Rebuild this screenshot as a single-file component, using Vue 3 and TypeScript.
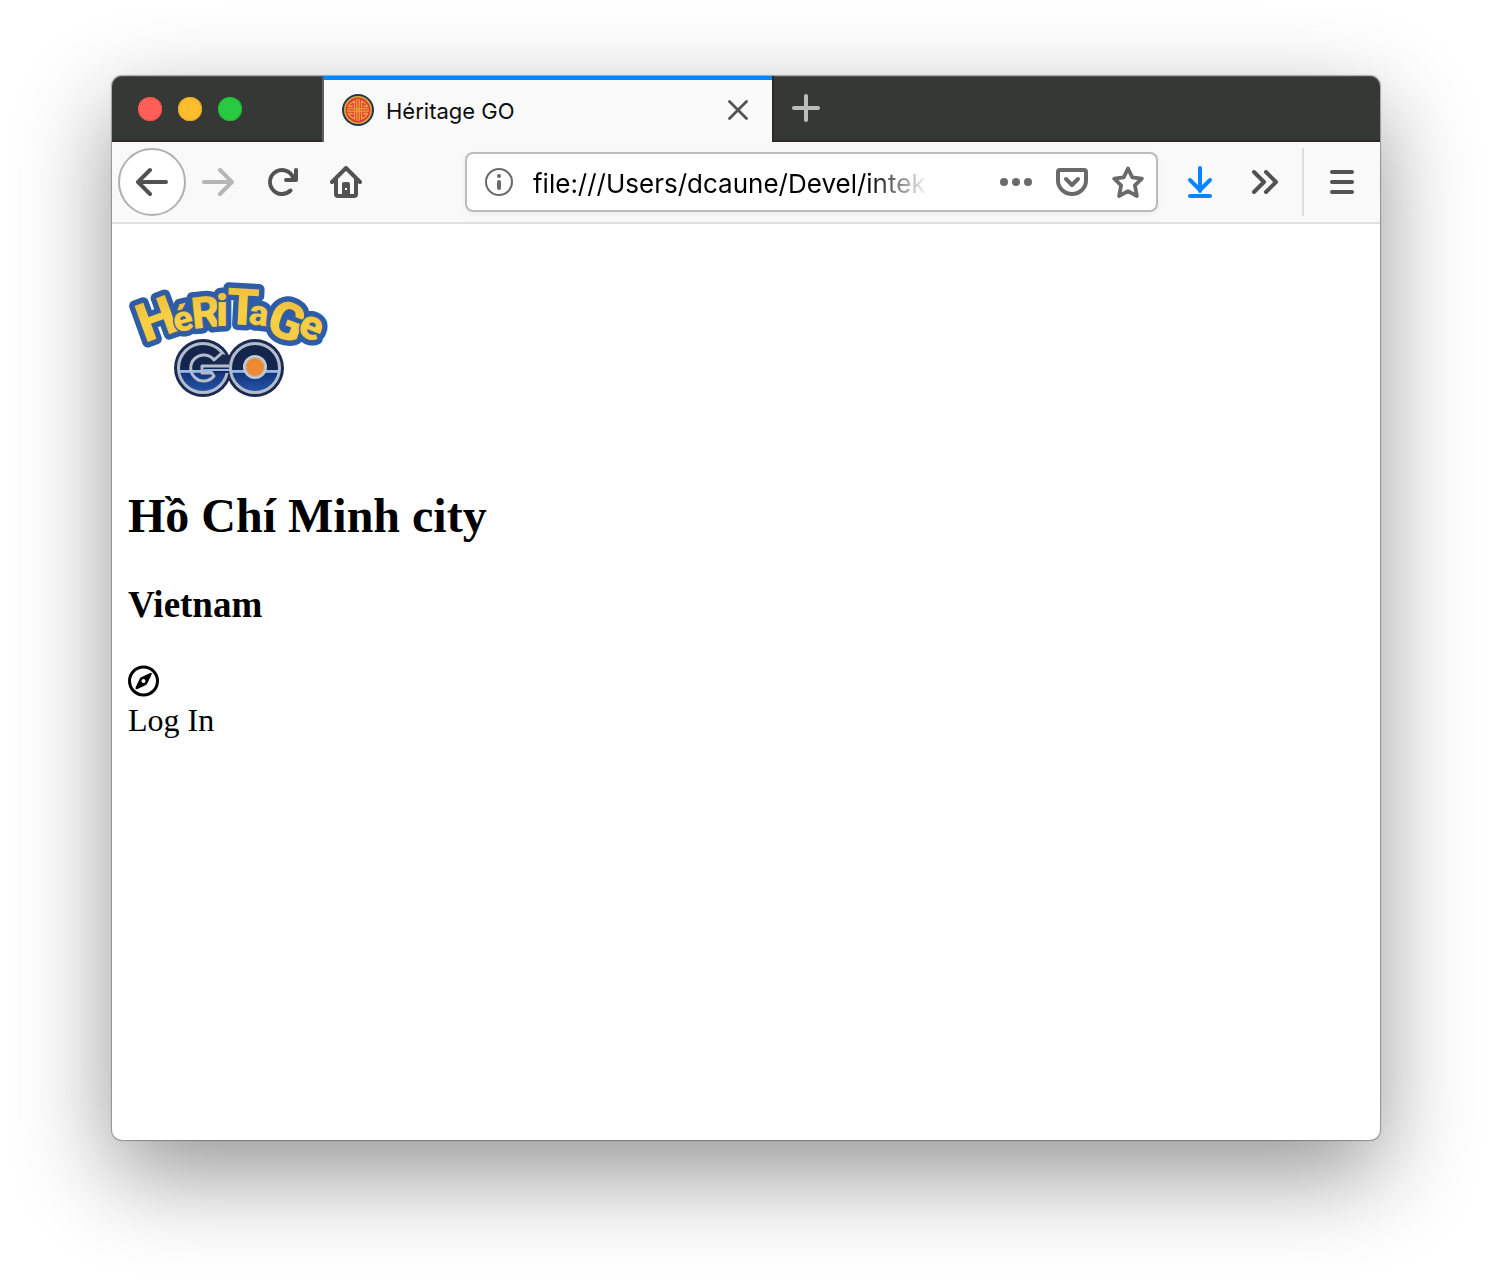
<script setup lang="ts">
import { ref } from 'vue'

interface LogoLetter {
  char: string
  x: number
  y: number
  size: number
  angle: number
}

const pageTitle = ref('Héritage GO')
const url = ref('file:///Users/dcaune/Devel/intek')

const letters: LogoLetter[] = [
  { char: 'H', x: 17, y: 103, size: 54, angle: -20 },
  { char: 'é', x: 48, y: 93, size: 36, angle: -14 },
  { char: 'R', x: 65, y: 89, size: 44, angle: -6 },
  { char: 'i', x: 88, y: 86, size: 44, angle: 0 },
  { char: 'T', x: 98, y: 84, size: 51, angle: 3 },
  { char: 'a', x: 120, y: 84, size: 36, angle: 7 },
  { char: 'G', x: 136, y: 92, size: 52, angle: 20 },
  { char: 'e', x: 168, y: 94, size: 42, angle: 22 },
]
</script>

<template>
  <main class="desktop">
    <section class="window">
      <header class="tabbar">
        <div class="lights">
          <button class="light red" aria-label="Close window"></button>
          <button class="light amber" aria-label="Minimize window"></button>
          <button class="light green" aria-label="Zoom window"></button>
        </div>
        <div class="tab">
          <svg class="icon" viewBox="0 0 32 32" aria-hidden="true">
            <circle cx="16" cy="16" r="16" fill="#23384f" />
            <circle cx="16" cy="16" r="13.2" fill="#dd3b35" stroke="#dfa63a" stroke-width="1.6" />
            <path
              d="M14.800 5v22M17.200 5v22M5 14.800h22M5 17.200h22M12.500 14.500V7Q8 9 6.500 12.500H10V11M19.500 14.500V7Q24 9 25.500 12.500H22V11M12.500 17.500V25Q8 23 6.500 19.500H10V21M19.500 17.500V25Q24 23 25.500 19.500H22V21"
              fill="none" stroke="#efa13c" stroke-width="1.300"
            />
          </svg>
          <span class="tab-title">{{ pageTitle }}</span>
          <button class="tab-close" aria-label="Close tab">
            <svg viewBox="0 0 20 20" width="20" height="20">
              <path d="M1.500 1.500l17 17M18.500 1.500l-17 17" fill="none" stroke="#525252" stroke-width="2.800" stroke-linecap="round" />
            </svg>
          </button>
        </div>
        <button class="new-tab" aria-label="New tab">
          <svg viewBox="0 0 28 28" width="28" height="28">
            <path d="M14 2v24M2 14h24" fill="none" stroke="#bcbcbc" stroke-width="4" stroke-linecap="round" />
          </svg>
        </button>
      </header>

      <nav class="toolbar">
        <button class="tool back" aria-label="Back">
          <svg class="icon" viewBox="0 0 16 16">
            <path d="M15 7H3.414l4.293-4.293a1 1 0 0 0-1.414-1.414l-6 6a1 1 0 0 0 0 1.414l6 6a1 1 0 0 0 1.414-1.414L3.414 9H15a1 1 0 0 0 0-2z" />
          </svg>
        </button>
        <button class="tool forward" aria-label="Forward" disabled>
          <svg class="icon" viewBox="0 0 16 16">
            <path d="M15.707 7.293l-6-6a1 1 0 0 0-1.414 1.414L12.586 7H1a1 1 0 0 0 0 2h11.586l-4.293 4.293a1 1 0 1 0 1.414 1.414l6-6a1 1 0 0 0 0-1.414z" />
          </svg>
        </button>
        <button class="tool" aria-label="Reload">
          <svg class="icon" viewBox="0 0 16 16">
            <path d="M15 1a1 1 0 0 0-1 1v2.418A6.995 6.995 0 1 0 8 15a6.954 6.954 0 0 0 4.950-2.050 1 1 0 0 0-1.414-1.414A5.019 5.019 0 1 1 12.549 6H10a1 1 0 0 0 0 2h5a1 1 0 0 0 1-1V2a1 1 0 0 0-1-1z" />
          </svg>
        </button>
        <button class="tool" aria-label="Home">
          <svg class="icon" viewBox="0 0 32 32">
            <path d="M2 16L16 2l14 14M6 13v15q0 2 2 2h16q2 0 2-2V13" fill="none" stroke="currentColor" stroke-width="4" stroke-linecap="round" stroke-linejoin="round" />
            <path d="M12 30V18q0-2 2-2h4q2 0 2 2v12h-3v-8h-2v2h2v6z" />
          </svg>
        </button>

        <div class="urlbar">
          <svg class="icon info" viewBox="0 0 32 32" aria-hidden="true">
            <circle cx="16" cy="16" r="13" fill="none" stroke="#6a6a6a" stroke-width="2" />
            <circle cx="16" cy="10" r="2" />
            <rect x="14" y="14" width="4" height="10" rx="2" />
          </svg>
          <input v-model="url" class="url" type="text" aria-label="Address" spellcheck="false" />
          <button class="action" aria-label="Page actions">
            <svg class="icon" viewBox="0 0 32 32">
              <circle cx="4" cy="16" r="4" /><circle cx="16" cy="16" r="4" /><circle cx="28" cy="16" r="4" />
            </svg>
          </button>
          <button class="action" aria-label="Save to Pocket">
            <svg class="icon" viewBox="0 0 32 32">
              <path d="M4 4h24q2 0 2 2v8.500a14 13.500 0 0 1-28 0V6q0-2 2-2z" fill="none" stroke="currentColor" stroke-width="4" />
              <path d="M10 13l6 6 6-6" fill="none" stroke="currentColor" stroke-width="4" stroke-linecap="round" stroke-linejoin="round" />
            </svg>
          </button>
          <button class="action" aria-label="Bookmark this page">
            <svg class="icon" viewBox="0 0 32 32">
              <path d="M16 2.500l4.200 8.800 9.600 1.400-6.900 6.700 2 10.600-8.900-4.800-8.900 4.800 2-10.600-6.900-6.700 9.600-1.400z" fill="none" stroke="currentColor" stroke-width="3.800" stroke-linejoin="round" />
            </svg>
          </button>
        </div>

        <button class="tool download" aria-label="Downloads">
          <svg class="icon" viewBox="0 0 32 32">
            <path d="M16 2v23M6 14l10 10 10-10M6 30h20" fill="none" stroke="currentColor" stroke-width="4" stroke-linecap="round" stroke-linejoin="round" />
          </svg>
        </button>
        <button class="tool" aria-label="More tools">
          <svg class="icon" viewBox="0 0 32 32">
            <path d="M6 6l10 10L6 26M18 6l10 10-10 10" fill="none" stroke="currentColor" stroke-width="4" stroke-linecap="round" stroke-linejoin="round" />
          </svg>
        </button>
        <span class="divider"></span>
        <button class="tool" aria-label="Open menu">
          <svg class="icon" viewBox="0 0 32 32">
            <path d="M6 6h20M6 16h20M6 26h20" fill="none" stroke="currentColor" stroke-width="4" stroke-linecap="round" />
          </svg>
        </button>
      </nav>

      <article class="page">
        <svg class="logo" viewBox="0 0 200 200" role="img" aria-label="Héritage GO">
          <defs>
            <linearGradient id="navy" x1="0" y1="0" x2="0" y2="1">
              <stop offset="0" stop-color="#14254a" />
              <stop offset="0.540" stop-color="#13264f" />
              <stop offset="0.550" stop-color="#8fb8ec" />
              <stop offset="0.590" stop-color="#8fb8ec" />
              <stop offset="0.600" stop-color="#14347c" />
              <stop offset="1" stop-color="#2456ab" />
            </linearGradient>
            <linearGradient id="gold" x1="0" y1="0" x2="0" y2="1">
              <stop offset="0" stop-color="#e9b93a" />
              <stop offset="0.500" stop-color="#f8cf45" />
              <stop offset="1" stop-color="#f4c63e" />
            </linearGradient>
          </defs>
          <g class="go">
            <circle cx="75" cy="128" r="29" fill="#1b2a52" />
            <circle cx="127" cy="128" r="29" fill="#1b2a52" />
            <circle cx="75" cy="128" r="24.500" fill="url(#navy)" stroke="#b4bccb" stroke-width="3" />
            <path d="M89 113L103 116V133H84z" fill="#1b2a52" />
            <path d="M95 112l-9 8a13 13 0 1 0 0 16l-2-3H74v-7h27" fill="none" stroke="#b4bccb" stroke-width="3" stroke-linejoin="round" />
            <path d="M76 130h26" stroke="#8fb8ec" stroke-width="2" />
            <circle cx="127" cy="128" r="24.500" fill="url(#navy)" stroke="#b4bccb" stroke-width="3" />
            <circle cx="127" cy="127" r="11" fill="#b4bccb" stroke="#c3c9d3" stroke-width="2" />
            <circle cx="127" cy="127" r="9" fill="#ee8b32" />
          </g>
          <g class="word shade">
            <text v-for="l in letters" :key="l.char" :x="l.x" :y="l.y" :font-size="l.size" :transform="`rotate(${l.angle} ${l.x} ${l.y})`">{{ l.char }}</text>
          </g>
          <g class="word face" aria-hidden="true">
            <text v-for="l in letters" :key="l.char" :x="l.x" :y="l.y" :font-size="l.size" :transform="`rotate(${l.angle} ${l.x} ${l.y})`">{{ l.char }}</text>
          </g>
        </svg>

        <h2>Hồ Chí Minh city</h2>
        <h3>Vietnam</h3>
        <svg class="compass" viewBox="0 0 32 32" aria-hidden="true">
          <circle cx="15.500" cy="16" r="14" fill="none" stroke="#000" stroke-width="3" />
          <path fill-rule="evenodd" d="M22.300 7.900Q24.300 7.400 23.600 9.400L19.300 18.600Q18.900 19.500 18 19.900L9 24.200Q6.900 24.700 7.600 22.600L11.800 13.500Q12.200 12.600 13.100 12.200zM15.500 14a2 2 0 1 0 0 4 2 2 0 0 0 0-4z" />
        </svg>
        <a class="login" href="#login">Log In</a>
      </article>
    </section>
  </main>
</template>

<style>
body {
  margin: 0;
  background: #fff;
}
</style>

<style scoped>
.desktop {
  box-sizing: border-box;
  min-height: 100vh;
  padding: 76px 112px 148px;
  display: flex;
  overflow: hidden;
}

.window {
  flex: 1;
  min-width: 0;
  display: flex;
  flex-direction: column;
  border-radius: 10px;
  background: #fff;
  box-shadow: 0 0 1px 1px rgba(0, 0, 0, 0.3), 0 34px 94px rgba(0, 0, 0, 0.42);
}

button {
  border: 0;
  padding: 0;
  background: none;
  color: inherit;
  display: flex;
  align-items: center;
  justify-content: center;
}

.icon {
  width: 32px;
  height: 32px;
  flex: none;
  fill: currentColor;
}

.tabbar {
  height: 66px;
  display: flex;
  background: #363836;
  border-radius: 10px 10px 0 0;
  box-shadow: inset 0 -2px #2b2928, inset 0 1px #525452;
}

.lights {
  box-sizing: border-box;
  width: 212px;
  padding-left: 26px;
  display: flex;
  align-items: center;
  gap: 16px;
  border-right: 2px solid #5f605f;
}

.light {
  width: 24px;
  height: 24px;
  border-radius: 50%;
}

.red {
  background: #ff5f57;
  box-shadow: inset 0 0 0 1px #e9524a;
}

.amber {
  background: #ffbd2e;
  box-shadow: inset 0 0 0 1px #e3a528;
}

.green {
  background: #28ca41;
  box-shadow: inset 0 0 0 1px #20b234;
}

.tab {
  box-sizing: border-box;
  width: 448px;
  padding: 0 18px 2px;
  display: flex;
  align-items: center;
  gap: 12px;
  background: #f9f9f9;
  border-top: 4px solid #0a84ff;
}

.tab-title {
  flex: 1;
  padding-top: 2px;
  font: 22px/28px Inter, "Liberation Sans", sans-serif;
  color: #0c0c0d;
}

.tab-close {
  width: 32px;
  height: 32px;
}

.new-tab {
  width: 66px;
  height: 64px;
  border-left: 2px solid #2b2928;
}

.toolbar {
  height: 80px;
  padding: 0 6px;
  display: flex;
  align-items: center;
  background: #f9f9f9;
  border-bottom: 2px solid #e0e0e0;
  color: #525252;
}

.tool {
  flex: none;
  width: 64px;
  height: 64px;
}

.back {
  box-sizing: border-box;
  width: 68px;
  height: 68px;
  border: 2px solid #b1b1b1;
  border-radius: 50%;
  background: #fff;
}

.forward {
  color: #b6b6b6;
}

.download {
  color: #0a84ff;
}

.divider {
  width: 2px;
  height: 68px;
  margin: 0 6px;
  background: #dedede;
}

.urlbar {
  box-sizing: border-box;
  flex: 1;
  min-width: 0;
  height: 60px;
  margin: 0 10px 0 87px;
  padding-left: 16px;
  display: flex;
  align-items: center;
  background: #fff;
  border: 2px solid #bbb;
  border-radius: 8px;
  box-shadow: 0 2px 6px rgba(0, 0, 0, 0.05);
  color: #6a6a6a;
}

.url {
  flex: 1;
  min-width: 0;
  height: 40px;
  margin: 0 60px 0 18px;
  padding: 2px 0 0;
  border: 0;
  outline: 0;
  background: none;
  font: 26px/38px Inter, "Liberation Sans", sans-serif;
  color: #000;
  mask-image: linear-gradient(to left, transparent, #000 60px);
}

.action {
  flex: none;
  width: 56px;
  height: 56px;
}

.page {
  padding: 16px;
  display: flex;
  flex-direction: column;
  align-items: flex-start;
  font-family: "Liberation Serif", serif;
  color: #000;
}

.logo {
  width: 200px;
  height: 200px;
  overflow: visible;
}

.word {
  font-family: Roboto, sans-serif;
  font-weight: 900;
  stroke-linejoin: round;
}

.shade {
  fill: #2d5ca8;
  stroke: #2d5ca8;
  stroke-width: 11px;
}

.face {
  fill: url(#gold);
  stroke: #3a5f96;
  stroke-width: 3px;
  paint-order: stroke;
}

h2 {
  margin: 48px 0 39px;
  font-size: 48px;
  line-height: 56px;
}

h3 {
  margin: 0 0 38px;
  font-size: 37px;
  line-height: 44px;
}

.compass {
  width: 32px;
  height: 32px;
  margin-bottom: 5px;
}

.login {
  font-size: 32px;
  line-height: 36px;
  color: #000;
  text-decoration: none;
}
</style>
